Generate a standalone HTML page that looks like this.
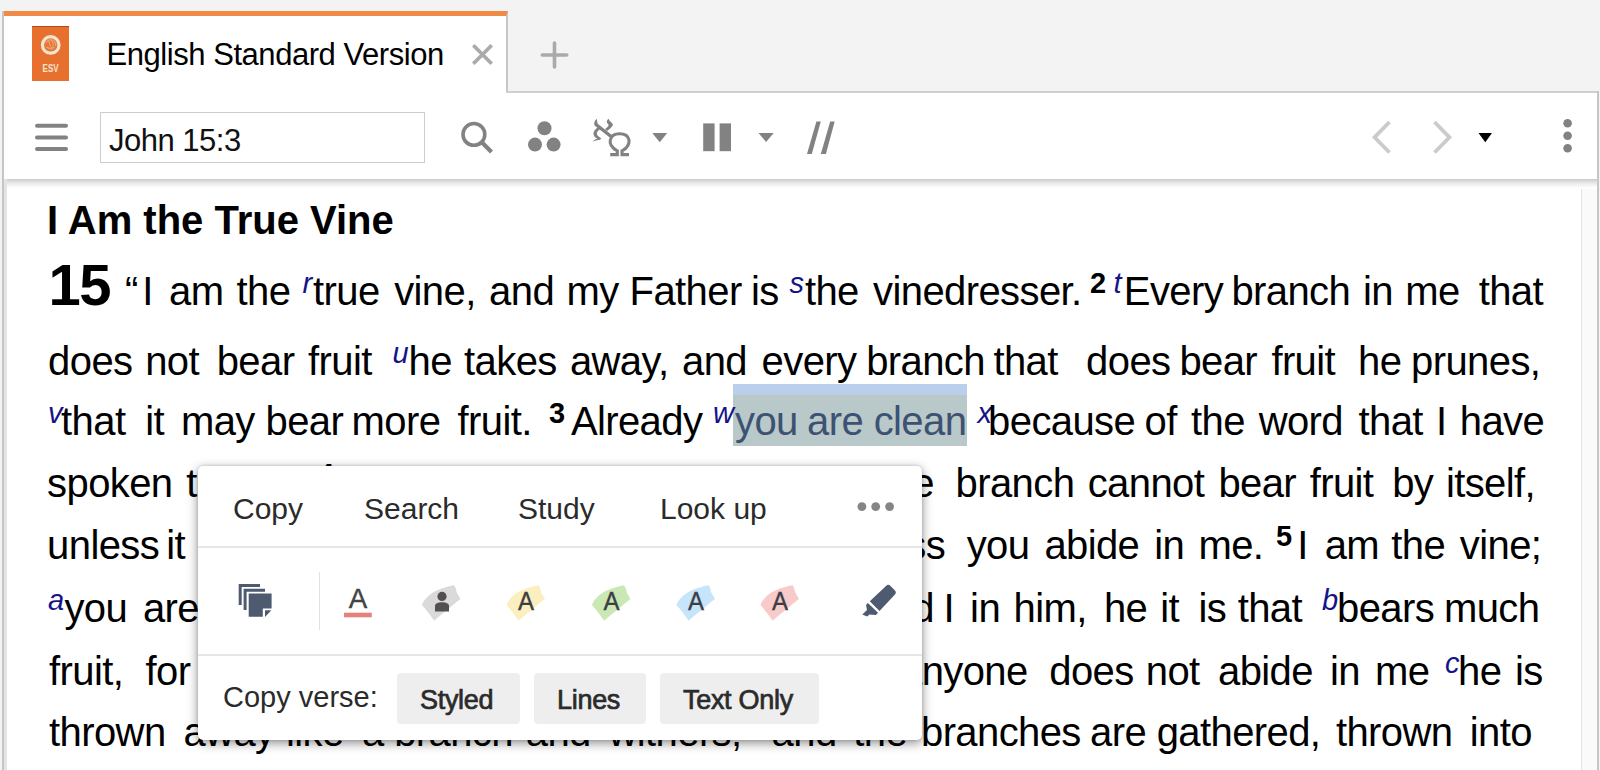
<!DOCTYPE html>
<html><head><meta charset="utf-8">
<style>
*{box-sizing:border-box}
html,body{margin:0;padding:0;width:1600px;height:770px;overflow:hidden;background:#f3f3f3;font-family:"Liberation Sans",sans-serif;position:relative}
.abs{position:absolute}
#leftb{left:2px;top:11px;width:2px;height:759px;background:#c6c6c6}
#rightb{left:1597px;top:91px;width:2px;height:679px;background:#c6c6c6}
#tab{left:4px;top:11px;width:504px;height:82px;background:#fff;border-top:5px solid #ef8a47;border-right:2px solid #c6c6c6}
#tabline{left:506px;top:91px;width:1093px;height:2px;background:#cfcfcf}
#toolbar{left:4px;top:93px;width:1593px;height:86px;background:#fff}
#tbshadow{left:4px;top:179px;width:1593px;height:10px;background:linear-gradient(#c9c9c9 0,#d2d2d2 1px,#e9e9e9 4px,#fff 9px)}
#content{left:4px;top:179px;width:1593px;height:591px;background:#fff}
#lshadow{left:4px;top:179px;width:3px;height:591px;background:#e4e4e4}
#scroll{left:1581px;top:179px;width:16px;height:591px;background:#fafafa;border-left:1px solid #e3e3e3}
.tx{white-space:nowrap;line-height:50px;height:50px;text-align:justify;text-align-last:justify;color:#000;font-size:40px;letter-spacing:-0.6px}
.cn{font-weight:bold;font-size:55px;letter-spacing:-1px;line-height:0}
.hl{color:#3d5272}
.sup{font-style:italic;color:#10107a;font-size:28px;position:relative;top:-13px;line-height:0}
.vn{font-weight:bold;font-size:26px;position:relative;top:-14px;line-height:0}
</style></head><body>
<div class="abs" id="tab"></div>
<div class="abs" id="tabline"></div>
<div class="abs" id="toolbar"></div>
<div class="abs" id="content"></div>
<div class="abs" id="scroll"></div>
<div class="abs" id="tbshadow"></div>
<div class="abs" id="lshadow"></div>
<div class="abs" id="leftb"></div>
<div class="abs" id="rightb"></div>

<!-- content -->
<style>.w{position:absolute;white-space:nowrap;line-height:0;color:#000}</style>
<div class="abs" style="left:733px;top:384px;width:234px;height:62px;background:linear-gradient(#bacfeb 0,#bacfeb 11px,#b9c8c9 11px)"></div>
<div class="abs" style="left:47px;top:194.7px;font-size:40px;font-weight:bold;line-height:50px;white-space:nowrap;letter-spacing:0px">I Am the True Vine</div>
<div class="w" style="left:48.4px;top:284.9px;font-size:58px;font-weight:bold;letter-spacing:-1.5px;">15</div>
<div class="w" style="left:125.1px;top:291.1px;font-size:40px;letter-spacing:-0.6px;">“</div>
<div class="w" style="left:142.2px;top:291.1px;font-size:40px;letter-spacing:-0.6px;">I</div>
<div class="w" style="left:169.0px;top:291.1px;font-size:40px;letter-spacing:-0.6px;">am</div>
<div class="w" style="left:236.6px;top:291.1px;font-size:40px;letter-spacing:-0.6px;">the</div>
<div class="w" style="left:302.6px;top:283.0px;font-size:29px;font-style:italic;color:#14148a;">r</div>
<div class="w" style="left:313.0px;top:291.1px;font-size:40px;letter-spacing:-0.6px;">true</div>
<div class="w" style="left:394.2px;top:291.1px;font-size:40px;letter-spacing:-0.6px;">vine,</div>
<div class="w" style="left:489.1px;top:291.1px;font-size:40px;letter-spacing:-0.6px;">and</div>
<div class="w" style="left:566.6px;top:291.1px;font-size:40px;letter-spacing:-0.6px;">my</div>
<div class="w" style="left:629.6px;top:291.1px;font-size:40px;letter-spacing:-0.6px;">Father</div>
<div class="w" style="left:750.9px;top:291.1px;font-size:40px;letter-spacing:-0.6px;">is</div>
<div class="w" style="left:789.6px;top:283.0px;font-size:29px;font-style:italic;color:#14148a;">s</div>
<div class="w" style="left:804.9px;top:291.1px;font-size:40px;letter-spacing:-0.6px;">the</div>
<div class="w" style="left:873.1px;top:291.1px;font-size:40px;letter-spacing:-0.6px;">vinedresser.</div>
<div class="w" style="left:1090.0px;top:282.5px;font-size:29px;font-weight:bold;">2</div>
<div class="w" style="left:1113.5px;top:283.0px;font-size:29px;font-style:italic;color:#14148a;">t</div>
<div class="w" style="left:1123.8px;top:291.1px;font-size:40px;letter-spacing:-0.6px;">Every</div>
<div class="w" style="left:1231.4px;top:291.1px;font-size:40px;letter-spacing:-0.6px;">branch</div>
<div class="w" style="left:1363.0px;top:291.1px;font-size:40px;letter-spacing:-0.6px;">in</div>
<div class="w" style="left:1405.2px;top:291.1px;font-size:40px;letter-spacing:-0.6px;">me</div>
<div class="w" style="left:1478.7px;top:291.1px;font-size:40px;letter-spacing:-0.6px;">that</div>
<div class="w" style="left:48.1px;top:361.1px;font-size:40px;letter-spacing:-0.6px;">does</div>
<div class="w" style="left:145.2px;top:361.1px;font-size:40px;letter-spacing:-0.6px;">not</div>
<div class="w" style="left:216.7px;top:361.1px;font-size:40px;letter-spacing:-0.6px;">bear</div>
<div class="w" style="left:308.1px;top:361.1px;font-size:40px;letter-spacing:-0.6px;">fruit</div>
<div class="w" style="left:392.6px;top:353.0px;font-size:29px;font-style:italic;color:#14148a;">u</div>
<div class="w" style="left:408.5px;top:361.1px;font-size:40px;letter-spacing:-0.6px;">he</div>
<div class="w" style="left:464.1px;top:361.1px;font-size:40px;letter-spacing:-0.6px;">takes</div>
<div class="w" style="left:569.9px;top:361.1px;font-size:40px;letter-spacing:-0.6px;">away,</div>
<div class="w" style="left:682.0px;top:361.1px;font-size:40px;letter-spacing:-0.6px;">and</div>
<div class="w" style="left:761.6px;top:361.1px;font-size:40px;letter-spacing:-0.6px;">every</div>
<div class="w" style="left:866.2px;top:361.1px;font-size:40px;letter-spacing:-0.6px;">branch</div>
<div class="w" style="left:993.4px;top:361.1px;font-size:40px;letter-spacing:-0.6px;">that</div>
<div class="w" style="left:1086.1px;top:361.1px;font-size:40px;letter-spacing:-0.6px;">does</div>
<div class="w" style="left:1179.4px;top:361.1px;font-size:40px;letter-spacing:-0.6px;">bear</div>
<div class="w" style="left:1271.4px;top:361.1px;font-size:40px;letter-spacing:-0.6px;">fruit</div>
<div class="w" style="left:1358.1px;top:361.1px;font-size:40px;letter-spacing:-0.6px;">he</div>
<div class="w" style="left:1411.1px;top:361.1px;font-size:40px;letter-spacing:-0.6px;">prunes,</div>
<div class="w" style="left:48.1px;top:413.0px;font-size:29px;font-style:italic;color:#14148a;">v</div>
<div class="w" style="left:61.1px;top:421.1px;font-size:40px;letter-spacing:-0.6px;">that</div>
<div class="w" style="left:145.2px;top:421.1px;font-size:40px;letter-spacing:-0.6px;">it</div>
<div class="w" style="left:181.0px;top:421.1px;font-size:40px;letter-spacing:-0.6px;">may</div>
<div class="w" style="left:265.5px;top:421.1px;font-size:40px;letter-spacing:-0.6px;">bear</div>
<div class="w" style="left:351.6px;top:421.1px;font-size:40px;letter-spacing:-0.6px;">more</div>
<div class="w" style="left:457.6px;top:421.1px;font-size:40px;letter-spacing:-0.6px;">fruit.</div>
<div class="w" style="left:549.0px;top:412.5px;font-size:29px;font-weight:bold;">3</div>
<div class="w" style="left:570.9px;top:421.1px;font-size:40px;letter-spacing:-0.6px;">Already</div>
<div class="w" style="left:712.9px;top:413.0px;font-size:29px;font-style:italic;color:#14148a;">w</div>
<div class="w" style="left:735.0px;top:421.1px;font-size:40px;letter-spacing:-0.6px;color:#3d5272;">you</div>
<div class="w" style="left:807.1px;top:421.1px;font-size:40px;letter-spacing:-0.6px;color:#3d5272;">are</div>
<div class="w" style="left:873.7px;top:421.1px;font-size:40px;letter-spacing:-0.6px;color:#3d5272;">clean</div>
<div class="w" style="left:977.5px;top:413.0px;font-size:29px;font-style:italic;color:#14148a;">x</div>
<div class="w" style="left:988.1px;top:421.1px;font-size:40px;letter-spacing:-0.6px;">because</div>
<div class="w" style="left:1144.6px;top:421.1px;font-size:40px;letter-spacing:-0.6px;">of</div>
<div class="w" style="left:1191.1px;top:421.1px;font-size:40px;letter-spacing:-0.6px;">the</div>
<div class="w" style="left:1258.7px;top:421.1px;font-size:40px;letter-spacing:-0.6px;">word</div>
<div class="w" style="left:1358.5px;top:421.1px;font-size:40px;letter-spacing:-0.6px;">that</div>
<div class="w" style="left:1436.1px;top:421.1px;font-size:40px;letter-spacing:-0.6px;">I</div>
<div class="w" style="left:1459.8px;top:421.1px;font-size:40px;letter-spacing:-0.6px;">have</div>
<div class="w" style="left:47.1px;top:482.5px;font-size:40px;letter-spacing:-0.6px;">spoken</div>
<div class="w" style="left:186.2px;top:482.5px;font-size:40px;letter-spacing:-0.6px;">to</div>
<div class="w" style="left:238.0px;top:482.5px;font-size:40px;letter-spacing:-0.6px;">you.</div>
<div class="w" style="left:318.0px;top:473.9px;font-size:29px;font-weight:bold;">4</div>
<div class="w" style="left:347.0px;top:474.4px;font-size:29px;font-style:italic;color:#14148a;">y</div>
<div class="w" style="left:360.0px;top:482.5px;font-size:40px;letter-spacing:-0.6px;">Abide</div>
<div class="w" style="left:478.0px;top:482.5px;font-size:40px;letter-spacing:-0.6px;">in</div>
<div class="w" style="left:523.0px;top:482.5px;font-size:40px;letter-spacing:-0.6px;">me,</div>
<div class="w" style="left:599.0px;top:482.5px;font-size:40px;letter-spacing:-0.6px;">and</div>
<div class="w" style="left:677.0px;top:482.5px;font-size:40px;letter-spacing:-0.6px;">I</div>
<div class="w" style="left:703.0px;top:482.5px;font-size:40px;letter-spacing:-0.6px;">in</div>
<div class="w" style="left:750.0px;top:482.5px;font-size:40px;letter-spacing:-0.6px;">you.</div>
<div class="w" style="left:830.0px;top:482.5px;font-size:40px;letter-spacing:-0.6px;">As</div>
<div class="w" style="left:880.0px;top:482.5px;font-size:40px;letter-spacing:-0.6px;">the</div>
<div class="w" style="left:955.6px;top:482.5px;font-size:40px;letter-spacing:-0.6px;">branch</div>
<div class="w" style="left:1087.7px;top:482.5px;font-size:40px;letter-spacing:-0.6px;">cannot</div>
<div class="w" style="left:1218.4px;top:482.5px;font-size:40px;letter-spacing:-0.6px;">bear</div>
<div class="w" style="left:1309.7px;top:482.5px;font-size:40px;letter-spacing:-0.6px;">fruit</div>
<div class="w" style="left:1392.2px;top:482.5px;font-size:40px;letter-spacing:-0.6px;">by</div>
<div class="w" style="left:1445.9px;top:482.5px;font-size:40px;letter-spacing:-0.6px;">itself,</div>
<div class="w" style="left:47.1px;top:545.0px;font-size:40px;letter-spacing:-0.6px;">unless</div>
<div class="w" style="left:166.3px;top:545.0px;font-size:40px;letter-spacing:-0.6px;">it</div>
<div class="w" style="left:204.0px;top:545.0px;font-size:40px;letter-spacing:-0.6px;">abides</div>
<div class="w" style="left:328.0px;top:545.0px;font-size:40px;letter-spacing:-0.6px;">in</div>
<div class="w" style="left:375.0px;top:545.0px;font-size:40px;letter-spacing:-0.6px;">the</div>
<div class="w" style="left:445.0px;top:545.0px;font-size:40px;letter-spacing:-0.6px;">vine,</div>
<div class="w" style="left:538.0px;top:545.0px;font-size:40px;letter-spacing:-0.6px;">neither</div>
<div class="w" style="left:679.0px;top:545.0px;font-size:40px;letter-spacing:-0.6px;">can</div>
<div class="w" style="left:755.0px;top:545.0px;font-size:40px;letter-spacing:-0.6px;">you,</div>
<div class="w" style="left:833.0px;top:545.0px;font-size:40px;letter-spacing:-0.6px;">unless</div>
<div class="w" style="left:966.7px;top:545.0px;font-size:40px;letter-spacing:-0.6px;">you</div>
<div class="w" style="left:1044.4px;top:545.0px;font-size:40px;letter-spacing:-0.6px;">abide</div>
<div class="w" style="left:1154.3px;top:545.0px;font-size:40px;letter-spacing:-0.6px;">in</div>
<div class="w" style="left:1198.5px;top:545.0px;font-size:40px;letter-spacing:-0.6px;">me.</div>
<div class="w" style="left:1276.0px;top:536.4px;font-size:29px;font-weight:bold;">5</div>
<div class="w" style="left:1297.3px;top:545.0px;font-size:40px;letter-spacing:-0.6px;">I</div>
<div class="w" style="left:1324.7px;top:545.0px;font-size:40px;letter-spacing:-0.6px;">am</div>
<div class="w" style="left:1391.3px;top:545.0px;font-size:40px;letter-spacing:-0.6px;">the</div>
<div class="w" style="left:1459.8px;top:545.0px;font-size:40px;letter-spacing:-0.6px;">vine;</div>
<div class="w" style="left:48.1px;top:600.3px;font-size:29px;font-style:italic;color:#14148a;">a</div>
<div class="w" style="left:64.4px;top:608.4px;font-size:40px;letter-spacing:-0.6px;">you</div>
<div class="w" style="left:142.9px;top:608.4px;font-size:40px;letter-spacing:-0.6px;">are</div>
<div class="w" style="left:210.0px;top:608.4px;font-size:40px;letter-spacing:-0.6px;">the</div>
<div class="w" style="left:283.0px;top:608.4px;font-size:40px;letter-spacing:-0.6px;">branches.</div>
<div class="w" style="left:460.0px;top:608.4px;font-size:40px;letter-spacing:-0.6px;">Whoever</div>
<div class="w" style="left:629.0px;top:608.4px;font-size:40px;letter-spacing:-0.6px;">abides</div>
<div class="w" style="left:758.0px;top:608.4px;font-size:40px;letter-spacing:-0.6px;">in</div>
<div class="w" style="left:803.0px;top:608.4px;font-size:40px;letter-spacing:-0.6px;">me</div>
<div class="w" style="left:869.0px;top:608.4px;font-size:40px;letter-spacing:-0.6px;">and</div>
<div class="w" style="left:943.6px;top:608.4px;font-size:40px;letter-spacing:-0.6px;">I</div>
<div class="w" style="left:970.1px;top:608.4px;font-size:40px;letter-spacing:-0.6px;">in</div>
<div class="w" style="left:1013.6px;top:608.4px;font-size:40px;letter-spacing:-0.6px;">him,</div>
<div class="w" style="left:1103.9px;top:608.4px;font-size:40px;letter-spacing:-0.6px;">he</div>
<div class="w" style="left:1160.2px;top:608.4px;font-size:40px;letter-spacing:-0.6px;">it</div>
<div class="w" style="left:1198.5px;top:608.4px;font-size:40px;letter-spacing:-0.6px;">is</div>
<div class="w" style="left:1237.7px;top:608.4px;font-size:40px;letter-spacing:-0.6px;">that</div>
<div class="w" style="left:1322.0px;top:600.3px;font-size:29px;font-style:italic;color:#14148a;">b</div>
<div class="w" style="left:1337.0px;top:608.4px;font-size:40px;letter-spacing:-0.6px;">bears</div>
<div class="w" style="left:1444.0px;top:608.4px;font-size:40px;letter-spacing:-0.6px;">much</div>
<div class="w" style="left:49.1px;top:670.6px;font-size:40px;letter-spacing:-0.6px;">fruit,</div>
<div class="w" style="left:145.5px;top:670.6px;font-size:40px;letter-spacing:-0.6px;">for</div>
<div class="w" style="left:209.0px;top:670.6px;font-size:40px;letter-spacing:-0.6px;">apart</div>
<div class="w" style="left:320.0px;top:670.6px;font-size:40px;letter-spacing:-0.6px;">from</div>
<div class="w" style="left:418.0px;top:670.6px;font-size:40px;letter-spacing:-0.6px;">me</div>
<div class="w" style="left:490.0px;top:670.6px;font-size:40px;letter-spacing:-0.6px;">you</div>
<div class="w" style="left:569.0px;top:670.6px;font-size:40px;letter-spacing:-0.6px;">can</div>
<div class="w" style="left:644.0px;top:670.6px;font-size:40px;letter-spacing:-0.6px;">do</div>
<div class="w" style="left:708.0px;top:670.6px;font-size:40px;letter-spacing:-0.6px;">nothing.</div>
<div class="w" style="left:849.0px;top:662.0px;font-size:29px;font-weight:bold;">6</div>
<div class="w" style="left:867.0px;top:670.6px;font-size:40px;letter-spacing:-0.6px;">If</div>
<div class="w" style="left:900.0px;top:670.6px;font-size:40px;letter-spacing:-0.6px;">anyone</div>
<div class="w" style="left:1049.3px;top:670.6px;font-size:40px;letter-spacing:-0.6px;">does</div>
<div class="w" style="left:1145.8px;top:670.6px;font-size:40px;letter-spacing:-0.6px;">not</div>
<div class="w" style="left:1218.0px;top:670.6px;font-size:40px;letter-spacing:-0.6px;">abide</div>
<div class="w" style="left:1330.0px;top:670.6px;font-size:40px;letter-spacing:-0.6px;">in</div>
<div class="w" style="left:1375.0px;top:670.6px;font-size:40px;letter-spacing:-0.6px;">me</div>
<div class="w" style="left:1445.0px;top:662.5px;font-size:29px;font-style:italic;color:#14148a;">c</div>
<div class="w" style="left:1458.0px;top:670.6px;font-size:40px;letter-spacing:-0.6px;">he</div>
<div class="w" style="left:1515.0px;top:670.6px;font-size:40px;letter-spacing:-0.6px;">is</div>
<div class="w" style="left:49.1px;top:732.1px;font-size:40px;letter-spacing:-0.6px;">thrown</div>
<div class="w" style="left:183.5px;top:732.1px;font-size:40px;letter-spacing:-0.6px;">away</div>
<div class="w" style="left:286.0px;top:732.1px;font-size:40px;letter-spacing:-0.6px;">like</div>
<div class="w" style="left:361.9px;top:732.1px;font-size:40px;letter-spacing:-0.6px;">a</div>
<div class="w" style="left:394.2px;top:732.1px;font-size:40px;letter-spacing:-0.6px;">branch</div>
<div class="w" style="left:525.8px;top:732.1px;font-size:40px;letter-spacing:-0.6px;">and</div>
<div class="w" style="left:608.5px;top:732.1px;font-size:40px;letter-spacing:-0.6px;">withers;</div>
<div class="w" style="left:757.0px;top:724.0px;font-size:29px;font-style:italic;color:#14148a;">d</div>
<div class="w" style="left:771.6px;top:732.1px;font-size:40px;letter-spacing:-0.6px;">and</div>
<div class="w" style="left:853.3px;top:732.1px;font-size:40px;letter-spacing:-0.6px;">the</div>
<div class="w" style="left:921.0px;top:732.1px;font-size:40px;letter-spacing:-0.6px;">branches</div>
<div class="w" style="left:1090.1px;top:732.1px;font-size:40px;letter-spacing:-0.6px;">are</div>
<div class="w" style="left:1156.7px;top:732.1px;font-size:40px;letter-spacing:-0.6px;">gathered,</div>
<div class="w" style="left:1335.9px;top:732.1px;font-size:40px;letter-spacing:-0.6px;">thrown</div>
<div class="w" style="left:1469.8px;top:732.1px;font-size:40px;letter-spacing:-0.6px;">into</div>
<!-- tab contents -->
<div class="abs" style="left:32px;top:26px;width:37px;height:55px;background:#e8702e;border-top:1px solid #b8441a"></div>
<svg class="abs" style="left:32px;top:26px" width="37" height="55" viewBox="0 0 37 55">
 <circle cx="18.7" cy="18.9" r="8.3" fill="#e5773a" stroke="#f1e5d2" stroke-width="3.2"/>
 <path d="M13.5 17 q3 -4 7 -3 q4 2 3 6 M14.5 21 q4 3 8 0 M16.5 14.5 q1 5 4 9 M19 15 q3 1 2 5" stroke="#eea772" stroke-width="1.1" fill="none"/>
 <text x="18.6" y="45.6" font-family="Liberation Sans" font-weight="bold" font-size="10.5" fill="#f1e5d2" text-anchor="middle" textLength="16" lengthAdjust="spacingAndGlyphs">ESV</text>
</svg>
<div class="abs" style="left:106.5px;top:35px;font-size:31px;line-height:40px;color:#000;letter-spacing:-0.45px">English Standard Version</div>
<svg class="abs" style="left:468px;top:40px" width="30" height="30" viewBox="0 0 30 30">
 <path d="M5.3 5.3 L23.7 23.7 M23.7 5.3 L5.3 23.7" stroke="#aaa" stroke-width="3.7"/>
</svg>
<svg class="abs" style="left:538px;top:39px" width="33" height="33" viewBox="0 0 33 33">
 <path d="M16.5 4 V28 M4.3 16 H28.7" stroke="#aaa" stroke-width="3.6" stroke-linecap="round"/>
</svg>

<!-- toolbar -->
<svg class="abs" style="left:30px;top:118px" width="44" height="40" viewBox="0 0 44 40">
 <path d="M7 7.7 H36 M7 19.4 H36 M7 31.1 H36" stroke="#828282" stroke-width="4" stroke-linecap="round"/>
</svg>
<div class="abs" style="left:100px;top:112px;width:325px;height:51px;border:1px solid #cdcdcd;background:#fff"></div>
<div class="abs" style="left:109px;top:121px;font-size:31px;line-height:40px;color:#111;letter-spacing:-0.5px">John 15:3</div>

<svg class="abs" style="left:440px;top:100px" width="440" height="70" viewBox="440 100 440 70">
 <circle cx="473.9" cy="134.4" r="10.9" fill="none" stroke="#828282" stroke-width="3.6"/>
 <path d="M481.5 142 L491.5 152" stroke="#828282" stroke-width="4.2"/>
 <circle cx="544.5" cy="128.2" r="7" fill="#828282"/>
 <circle cx="535" cy="144.6" r="7" fill="#828282"/>
 <circle cx="553.6" cy="144.6" r="7" fill="#828282"/>
 <path d="M652.3 133 H667.2 L659.75 142.2 Z" fill="#828282"/>
 <path d="M758.5 133 H773.7 L766.1 141.9 Z" fill="#828282"/>
 <rect x="703.2" y="123.4" width="11.4" height="27.8" fill="#828282"/>
 <rect x="719.6" y="123.4" width="11.4" height="27.8" fill="#828282"/>
 <path d="M816.4 121.6 H820.8 L811.8 154 H807 Z" fill="#828282"/>
 <path d="M830.2 121.6 H834.7 L825.9 154 H820.8 Z" fill="#828282"/>
 <!-- aleph omega -->
 <g fill="#828282" stroke="none">
  <path d="M596.5 118.8 C597.5 121 597 123 598 124 L612.5 135.5 L611 138.5 L594.5 125.5 C593.5 123 595 120.5 596.5 118.8 Z"/>
  <path d="M608.6 118.8 C609 121 612 122.5 613 124.5 C612.5 127 609 129.5 607 131 L605 129 C607 127.5 609 126 608.5 124.5 C606.5 123 606 120.5 608.6 118.8 Z"/>
  <path d="M598 127.5 L600 129.5 C597 131 596 133 597.5 135.5 C599 137 601 137.5 601.2 138.8 C600 140.5 597 140 596 140.5 C594.5 140.8 593.5 141.5 592.7 141.5 C594 140 596 139 597.5 138.8 C594 137 593.2 135 593.5 132.5 C594.5 130 596 128.5 598 127.5 Z"/>
 </g>
 <g fill="none" stroke="#828282">
  <path d="M610.2 154.6 H617.3 V150.8 C611.5 148 609.5 143 610.3 140 C611.5 135 615 133.8 619.5 133.8 C624 133.8 628 135 629 140 C629.5 143 628 148 622 150.8 V154.6 H629" stroke-width="3.1"/>
 </g>
</svg>
<svg class="abs" style="left:1360px;top:100px" width="230" height="70" viewBox="1360 100 230 70">
 <!-- right side -->
 <path d="M1389.5 122 L1374.5 137.3 L1389.5 152.5" fill="none" stroke="#cbcbcb" stroke-width="3.8"/>
 <path d="M1434.5 122 L1449.5 137.3 L1434.5 152.5" fill="none" stroke="#cbcbcb" stroke-width="3.8"/>
 <path d="M1478.5 133 H1492 L1485.25 142.3 Z" fill="#000"/>
 <circle cx="1567.6" cy="123.3" r="4.3" fill="#828282"/>
 <circle cx="1567.6" cy="135.8" r="4.3" fill="#828282"/>
 <circle cx="1567.6" cy="148.3" r="4.3" fill="#828282"/>
</svg>

<!-- popup -->
<div class="abs" style="left:198px;top:465.5px;width:724px;height:274.5px;background:#fff;border-radius:5px;box-shadow:0 3px 11px rgba(0,0,0,0.45),0 0 3px rgba(0,0,0,0.15)"></div>
<div class="abs" style="left:198px;top:546px;width:724px;height:2px;background:#e6e6e6"></div>
<div class="abs" style="left:198px;top:653.5px;width:724px;height:2px;background:#e6e6e6"></div>
<div class="abs" style="left:318.5px;top:572px;width:1.5px;height:58px;background:#e2e2e2"></div>
<div class="pm" style="left:233px">Copy</div>
<div class="pm" style="left:364px">Search</div>
<div class="pm" style="left:518px">Study</div>
<div class="pm" style="left:660px">Look up</div>
<style>
.pm{position:absolute;top:508.5px;line-height:0;font-size:30px;color:#2b2b2b;white-space:nowrap}
.pb{position:absolute;top:672.5px;height:51.5px;background:#eeeeee;border-radius:4px}
.pbt{position:absolute;line-height:0;top:699.6px;font-size:27px;font-weight:normal;-webkit-text-stroke:0.7px #2b2b2b;color:#2b2b2b;white-space:nowrap;letter-spacing:-0.3px}
</style>
<svg class="abs" style="left:198px;top:466px" width="724" height="274" viewBox="198 466 724 274">
 <circle cx="861.9" cy="506.6" r="4.4" fill="#858585"/>
 <circle cx="875.7" cy="506.6" r="4.4" fill="#858585"/>
 <circle cx="889.6" cy="506.6" r="4.4" fill="#858585"/>
 <!-- copy stack icon -->
 <g fill="#4e5a6f">
  <path d="M238.7 584 H260 V587 H241.7 V605 H238.7 Z"/>
  <path d="M243.6 588.7 H265 V591.7 H246.6 V610 H243.6 Z"/>
  <path d="M248.7 593.6 H271.6 V608.4 H262.8 V616.8 H248.7 Z"/>
  <path d="M265 610.2 H271.4 L265 617 Z"/>
 </g>
 <!-- A underline -->
 <text x="357.9" y="607.8" font-family="Liberation Sans" font-size="28.5" fill="#444" stroke="#444" stroke-width="0.4" text-anchor="middle" textLength="18.5" lengthAdjust="spacingAndGlyphs">A</text>
 <rect x="344" y="612.7" width="27.8" height="4.6" fill="#e3837a"/>
 <!-- gray person blob -->
 <path transform="translate(441.5 601.5)" d="M-19.6 3.5 C-17 -3.5 -10 -9.5 0 -13 C5 -14.5 9 -15.5 12.5 -16.2 C14.5 -14 14.5 -11 15.5 -8.5 L19 -2.4 C12 3 4 10 -7.4 19.2 C-11 14 -15 8.5 -19.6 3.5 Z" fill="#dadada"/>
 <circle cx="442" cy="596.4" r="4.6" fill="#555050"/>
 <path d="M435 611.4 V606 C435 603.5 438 602.3 442 602.3 C446 602.3 449 603.5 449 606 V611.4 Z" fill="#555050"/>
 <!-- colored A blobs -->
 <path transform="translate(526 601.5)" d="M-19.6 3.5 C-17 -3.5 -10 -9.5 0 -13 C5 -14.5 9 -15.5 12.5 -16.2 C14.5 -14 14.5 -11 15.5 -8.5 L19 -2.4 C12 3 4 10 -7.4 19.2 C-11 14 -15 8.5 -19.6 3.5 Z" fill="#fbefc0"/>
 <path transform="translate(611.5 601.5)" d="M-19.6 3.5 C-17 -3.5 -10 -9.5 0 -13 C5 -14.5 9 -15.5 12.5 -16.2 C14.5 -14 14.5 -11 15.5 -8.5 L19 -2.4 C12 3 4 10 -7.4 19.2 C-11 14 -15 8.5 -19.6 3.5 Z" fill="#c9e8b4"/>
 <path transform="translate(696 601.5)" d="M-19.6 3.5 C-17 -3.5 -10 -9.5 0 -13 C5 -14.5 9 -15.5 12.5 -16.2 C14.5 -14 14.5 -11 15.5 -8.5 L19 -2.4 C12 3 4 10 -7.4 19.2 C-11 14 -15 8.5 -19.6 3.5 Z" fill="#c6e4fa"/>
 <path transform="translate(780 601.5)" d="M-19.6 3.5 C-17 -3.5 -10 -9.5 0 -13 C5 -14.5 9 -15.5 12.5 -16.2 C14.5 -14 14.5 -11 15.5 -8.5 L19 -2.4 C12 3 4 10 -7.4 19.2 C-11 14 -15 8.5 -19.6 3.5 Z" fill="#f8caca"/>
 <g font-family="Liberation Sans" font-size="26" fill="#3d3d44" stroke="#3d3d44" stroke-width="0.35" text-anchor="middle">
  <text x="526" y="610.4" textLength="16" lengthAdjust="spacingAndGlyphs">A</text>
  <text x="611.5" y="610.4" textLength="16" lengthAdjust="spacingAndGlyphs">A</text>
  <text x="696" y="610.4" textLength="16" lengthAdjust="spacingAndGlyphs">A</text>
  <text x="780" y="610.4" textLength="16" lengthAdjust="spacingAndGlyphs">A</text>
 </g>
 <!-- highlighter -->
 <g fill="#4e5a6f">
  <path d="M886 586 C887.5 584.3 889 584.3 890.5 586 L894.5 590 C896.3 591.8 896.3 593 894.5 595 L879.5 611 L869.8 601.3 Z"/>
  <path d="M867.9 603 L878 612.7 L876 615 L869.5 614.5 L867.2 616.5 L862.3 614.6 L867 610 L866 605 Z"/>
 </g>
</svg>
<div class="abs" style="left:223px;top:697px;line-height:0;font-size:29px;color:#2b2b2b;white-space:nowrap">Copy verse:</div>
<div class="pb" style="left:397px;width:123px"></div>
<div class="pb" style="left:534.4px;width:111.6px"></div>
<div class="pb" style="left:660.4px;width:158.6px"></div>
<div class="pbt" style="left:420px">Styled</div>
<div class="pbt" style="left:557px">Lines</div>
<div class="pbt" style="left:683px">Text Only</div>

</body></html>
